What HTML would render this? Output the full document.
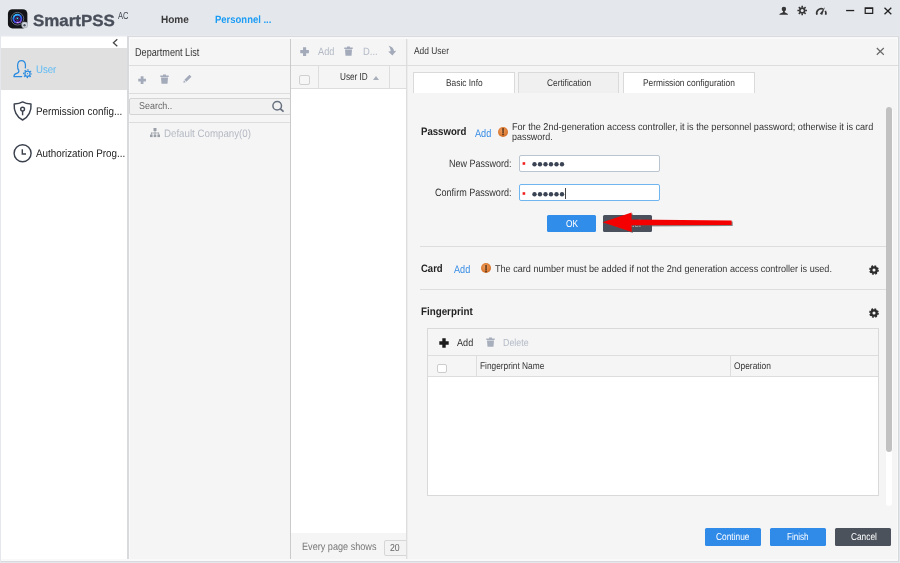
<!DOCTYPE html>
<html><head><meta charset="utf-8">
<style>
*{box-sizing:border-box;margin:0;padding:0}
html,body{width:900px;height:563px;overflow:hidden}
body{background:#e4e7ec;font-family:"Liberation Sans",sans-serif;position:relative;text-rendering:geometricPrecision}
.a{position:absolute}
.t{position:absolute;white-space:nowrap;line-height:1;transform-origin:0 0;filter:blur(0.3px)}
</style></head><body>
<svg class="a" style="left:7px;top:8px" width="23" height="23" viewBox="0 0 23 23"><defs><linearGradient id="lg" x1="0.2" y1="0" x2="0.7" y2="1"><stop offset="0" stop-color="#3ad2ff"/><stop offset="0.45" stop-color="#2a6cf0"/><stop offset="0.8" stop-color="#5a40d8"/><stop offset="1" stop-color="#b070f0"/></linearGradient></defs><rect x="0.4" y="0.7" width="20.5" height="20.2" rx="5" fill="#f1f3f6"/><rect x="0.9" y="1.2" width="19.5" height="19.2" rx="4.5" fill="#121418"/><circle cx="10.4" cy="10.7" r="6.3" fill="#0a0c10" stroke="#8a91a4" stroke-width="0.7"/><circle cx="10.4" cy="10.7" r="4.9" fill="url(#lg)"/><circle cx="10.4" cy="10.7" r="3" fill="#0a0a16"/><circle cx="10.4" cy="10.7" r="1.9" fill="none" stroke="#a030b8" stroke-width="0.6"/><circle cx="10.4" cy="10.4" r="0.9" fill="#38dcf0"/><ellipse cx="10.6" cy="14.4" rx="1.1" ry="0.6" fill="#f0b0ff" opacity="0.85"/><circle cx="17.7" cy="17" r="3.3" fill="#b4bac4"/><circle cx="17.7" cy="17" r="2.2" fill="#d9dde3"/><circle cx="17.5" cy="17.2" r="1.2" fill="#4a505c"/></svg>
<div class="t" style="left:32.8px;top:13px;font-size:16.1px;color:#494f5a;font-weight:bold;transform:scaleX(1.0521);-webkit-text-stroke:0.3px #494f5a;">SmartPSS</div>
<div class="t" style="left:117.5px;top:12px;font-size:10.2px;color:#494f5a;transform:scaleX(0.7406);">AC</div>
<div class="t" style="left:161.3px;top:15px;font-size:10.6px;color:#3a3a3a;font-weight:bold;transform:scaleX(0.9468);">Home</div>
<div class="t" style="left:215.3px;top:15px;font-size:10.6px;color:#1a9cf5;font-weight:bold;transform:scaleX(0.895);">Personnel ...</div>
<svg class="a" style="left:775px;top:3px" width="120" height="16" viewBox="0 0 120 16">
 <g fill="#363636"><circle cx="8.9" cy="5.9" r="2.25"/><rect x="8" y="7.6" width="1.8" height="2.4"/><path d="M4.2 11.8Q4.3 10.3 6.4 9.9L8 9.3H9.8L11.2 9.9Q13 10.3 13.1 11.8Z"/></g>
 <g fill="none" stroke="#363636"><circle cx="27.2" cy="7.5" r="2.35" stroke-width="1.6"/><path stroke-width="1.6" d="M27.2 2.7v1.9M27.2 10.4v1.9M22.4 7.5h1.9M30.1 7.5h1.9M23.81 4.11l1.34 1.34M29.25 9.55l1.34 1.34M30.59 4.11l-1.34 1.34M25.15 9.55l-1.34 1.34"/></g>
 <g fill="none" stroke="#363636" stroke-width="1.7"><path d="M41.98 11.77A4.6 4.6 0 0 1 48.24 6.03"/><path d="M50.28 7.9A4.6 4.6 0 0 1 50.62 11.77"/></g>
 <path d="M44.8 10.7L50 4L47.2 12Z" fill="#363636"/>
 <rect x="71.1" y="6.9" width="8.1" height="1.3" fill="#222"/>
 <path d="M89.6 4.2h8.7v6.8h-8.7zM90.8 6.1v3.7h6.3v-3.7z" fill="#222" fill-rule="evenodd"/>
 <path d="M109.5 4.7l6.8 6.5M116.3 4.7l-6.8 6.5" stroke="#222" stroke-width="1.3" fill="none"/>
</svg>
<div class="a" style="left:0px;top:35px;width:900px;height:1px;background:#e7e9ee;"></div>
<div class="a" style="left:1px;top:36px;width:126px;height:525px;background:#fff;"></div>
<div class="a" style="left:1px;top:36px;width:126px;height:1px;background:#f2f3f5;"></div>
<div class="a" style="left:1px;top:48px;width:126px;height:41.5px;background:#e0e0e0;"></div>
<svg class="a" style="left:110px;top:37px" width="12" height="12" viewBox="0 0 12 12"><path d="M7.3 2.3L3.4 5.8l3.9 3.5" fill="none" stroke="#444" stroke-width="1.25"/></svg>
<svg class="a" style="left:12px;top:58px" width="22" height="22" viewBox="0 0 22 22"><g fill="none" stroke="#2b8be0" stroke-width="1.25" stroke-linecap="round" stroke-linejoin="round"><path d="M9.7 18.6H2C1.8 16.6 3 15.9 4.7 15.4C6.4 14.9 7 13.9 6.9 12.6C5.9 11.4 5.4 9.6 5.6 7.2C5.8 4.3 7.3 2.5 9.5 2.5C11.8 2.5 13.2 4.1 13.4 6.6C13.5 7.6 13.5 8.8 13.3 9.8"/></g><g fill="none" stroke="#2b8be0"><circle cx="15.5" cy="15.7" r="2.6" stroke-width="1.2"/><circle cx="15.5" cy="15.7" r="3.9" stroke-width="1.1" stroke-dasharray="1.5 1.563" stroke-dashoffset="0.75"/></g><circle cx="15.5" cy="15.7" r="0.65" fill="#2b8be0"/></svg>
<div class="t" style="left:36.4px;top:65px;font-size:10.8px;color:#5bbaf6;transform:scaleX(0.8908);">User</div>
<svg class="a" style="left:12px;top:100px" width="22" height="22" viewBox="0 0 22 22"><g fill="none" stroke="#3b424e" stroke-width="1.45" stroke-linejoin="round"><path d="M10.7 1.7c-2.4 1.5-5 2.1-8.4 2.2c-.3 3.5.4 6.8 1.7 9.5c1.4 2.8 3.6 5.2 6.7 6.8c3.1-1.6 5.3-4 6.7-6.8c1.3-2.7 2-6 1.7-9.5c-3.4-.1-6-.7-8.4-2.2z" transform="translate(-0.1,0.2) scale(1,0.98)"/><circle cx="10.6" cy="9.1" r="1.9"/><path d="M10.6 11v4.3"/></g></svg>
<div class="t" style="left:36px;top:107px;font-size:11.1px;color:#222;transform:scaleX(0.8901);">Permission config...</div>
<svg class="a" style="left:12px;top:142px" width="22" height="22" viewBox="0 0 22 22"><g fill="none" stroke="#3b424e" stroke-width="1.45"><circle cx="10.6" cy="11.3" r="8.5"/><path d="M10.3 7.2v4.8h3.7" stroke-width="1.4"/></g></svg>
<div class="t" style="left:36px;top:149px;font-size:11px;color:#222;transform:scaleX(0.895);">Authorization Prog...</div>
<div class="a" style="left:127px;top:36px;width:2px;height:525px;background:#d8dadd;"></div>
<div class="a" style="left:129px;top:36px;width:161px;height:525px;background:#f5f5f5;"></div>
<div class="a" style="left:129px;top:36px;width:1px;height:525px;background:#f9f9f9;"></div>
<div class="t" style="left:135px;top:48px;font-size:11.4px;color:#333;transform:scaleX(0.7989);">Department List</div>
<div class="a" style="left:129px;top:65px;width:161px;height:1px;background:#dddddd;"></div>
<div class="a" style="left:129px;top:93px;width:161px;height:1px;background:#dddddd;"></div>
<svg class="a" style="left:138px;top:75.5px" width="8.2" height="8.2" viewBox="0 0 10 10"><path fill="#a3aaba" d="M3.3 0.3h3.4v3h3v3.4h-3v3h-3.4v-3h-3v-3.4h3z"/></svg>
<svg class="a" style="left:160.2px;top:74.2px" width="9" height="10" viewBox="0 0 9 10"><path fill="#a3aaba" d="M0.3 1.6h2.7v-1.1h3v1.1h2.7v1.3h-8.4zM1 3.6h7l-.5 6.2h-6z"/></svg>
<svg class="a" style="left:183px;top:74.3px" width="9.5" height="9.5" viewBox="0 0 10 10"><path fill="#a3aaba" d="M6.8 0.7l2.1 2.1-5.3 5.3-2.1-2.1zM1 6.7l1.9 1.9-2.6.7z"/></svg>
<div class="a" style="left:129px;top:98px;width:162px;height:16.5px;background:#f1f1f1;border:1px solid #d4d4d4;border-radius:2px"></div>
<div class="t" style="left:139.3px;top:102px;font-size:9.9px;color:#666;transform:scaleX(0.9057);">Search..</div>
<svg class="a" style="left:271px;top:99px" width="14" height="14" viewBox="0 0 14 14"><circle cx="6.2" cy="6.7" r="4.3" fill="none" stroke="#68717f" stroke-width="1.5"/><path d="M9.4 9.9l2.6 2.3" stroke="#68717f" stroke-width="1.8" stroke-linecap="round"/></svg>
<div class="a" style="left:129px;top:122px;width:161px;height:1px;background:#dddddd;"></div>
<svg class="a" style="left:149px;top:127px" width="12" height="12" viewBox="0 0 12 12"><g fill="#9a9fa8"><rect x="4.5" y="1" width="3" height="3"/><rect x="1" y="7.5" width="2.6" height="2.6"/><rect x="4.7" y="7.5" width="2.6" height="2.6"/><rect x="8.4" y="7.5" width="2.6" height="2.6"/><rect x="5.6" y="4" width=".8" height="3.5"/><rect x="2" y="5.6" width="8" height=".8"/><rect x="2" y="5.6" width=".8" height="2"/><rect x="9.3" y="5.6" width=".8" height="2"/></g></svg>
<div class="t" style="left:164px;top:129px;font-size:10.8px;color:#b4b9c2;transform:scaleX(0.9001);">Default Company(0)</div>
<div class="a" style="left:290px;top:36px;width:1px;height:525px;background:#cacaca;"></div>
<div class="a" style="left:291px;top:36px;width:115px;height:525px;background:#f5f5f5;"></div>
<svg class="a" style="left:300px;top:46.5px" width="9.2" height="9.2" viewBox="0 0 10 10"><path fill="#a3aaba" d="M3.3 0.3h3.4v3h3v3.4h-3v3h-3.4v-3h-3v-3.4h3z"/></svg>
<div class="t" style="left:318.3px;top:47px;font-size:10.6px;color:#b3bac6;transform:scaleX(0.8692);">Add</div>
<svg class="a" style="left:343.8px;top:45.8px" width="9" height="10" viewBox="0 0 9 10"><path fill="#a3aaba" d="M0.3 1.6h2.7v-1.1h3v1.1h2.7v1.3h-8.4zM1 3.6h7l-.5 6.2h-6z"/></svg>
<div class="t" style="left:362.8px;top:47px;font-size:10.6px;color:#b3bac6;transform:scaleX(0.8918);">D...</div>
<svg class="a" style="left:386px;top:44px" width="12" height="13" viewBox="386 44 12 13"><path fill="#a3aaba" d="M388.6 45.7C391.6 46.3 393.7 48.3 394 50.9L396.3 50.7L392.4 55.4L388.2 51.5L390.7 51.3C390.6 49.3 389.9 47.4 388.6 45.7Z"/></svg>
<div class="a" style="left:291px;top:65px;width:115px;height:1px;background:#dddddd;"></div>
<div class="a" style="left:291px;top:88px;width:115px;height:1px;background:#dddddd;"></div>
<div class="a" style="left:291px;top:89px;width:115px;height:444px;background:#fff;"></div>
<div class="a" style="left:299px;top:75px;width:10.5px;height:10px;background:#f6f6f6;border:1px solid #d0d0d0;border-radius:2px"></div>
<div class="a" style="left:318px;top:66px;width:1px;height:22px;background:#dddddd;"></div>
<div class="a" style="left:389px;top:66px;width:1px;height:22px;background:#dddddd;"></div>
<div class="t" style="left:340px;top:73px;font-size:10.2px;color:#333;transform:scaleX(0.804);">User ID</div>
<svg class="a" style="left:372.5px;top:75.8px" width="6" height="4" viewBox="0 0 6 4"><path d="M0 4L3 0L6 4z" fill="#a9afba"/></svg>
<div class="t" style="left:301.7px;top:542px;font-size:10.6px;color:#777;transform:scaleX(0.8603);">Every page shows</div>
<div class="a" style="left:384px;top:540px;width:24px;height:15.5px;background:#f3f3f3;border:1px solid #d6d6d6;border-radius:2px"></div>
<div class="t" style="left:390.3px;top:544px;font-size:10.2px;color:#666;transform:scaleX(0.8567);">20</div>
<div class="a" style="left:406px;top:36px;width:492px;height:525px;background:#f5f5f5;"></div>
<div class="a" style="left:406px;top:36px;width:1px;height:525px;background:#dddddd;"></div>
<div class="a" style="left:407px;top:36px;width:1px;height:525px;background:#ececec;"></div>
<div class="a" style="left:897px;top:36px;width:1px;height:525px;background:#fafafa;"></div>
<div class="a" style="left:898px;top:36px;width:1px;height:525px;background:#d6d8db;"></div>
<div class="a" style="left:129px;top:36px;width:770px;height:1px;background:#d9dbde;"></div>
<div class="a" style="left:129px;top:37px;width:769px;height:1px;background:#f8f8f8;"></div>
<div class="a" style="left:129px;top:38px;width:769px;height:1px;background:#fafafa;"></div>
<div class="a" style="left:1px;top:559px;width:897px;height:2px;background:#f9f9f9;"></div>
<div class="a" style="left:1px;top:561px;width:898px;height:1px;background:#d8dadd;"></div>
<div class="t" style="left:414.2px;top:47px;font-size:9.8px;color:#333;transform:scaleX(0.8565);">Add User</div>
<svg class="a" style="left:876px;top:47px" width="9" height="9" viewBox="0 0 9 9"><path d="M0.8 1l7 6.8M7.8 1l-7 6.8" stroke="#6a6a6a" stroke-width="1.2" fill="none"/></svg>
<div class="a" style="left:407px;top:65px;width:491px;height:1px;background:#dddddd;"></div>
<div class="a" style="left:413.3px;top:72px;width:101.7px;height:20.5px;background:#fff;border:1px solid #dadada;border-bottom:none"></div>
<div class="t" style="left:445.8px;top:79px;font-size:9.7px;color:#333;transform:scaleX(0.8618);">Basic Info</div>
<div class="a" style="left:518.3px;top:72px;width:101px;height:20.5px;background:#f0f0f0;border:1px solid #dadada;border-bottom:none"></div>
<div class="t" style="left:547px;top:79px;font-size:9.7px;color:#333;transform:scaleX(0.8611);">Certification</div>
<div class="a" style="left:623px;top:72px;width:132px;height:20.5px;background:#fff;border:1px solid #dadada;border-bottom:none"></div>
<div class="t" style="left:642.6px;top:79px;font-size:9.7px;color:#333;transform:scaleX(0.8662);">Permission configuration</div>
<div class="a" style="left:886px;top:106.5px;width:5.5px;height:399px;background:#fff;border-radius:3px"></div>
<div class="a" style="left:892px;top:110px;width:1px;height:340px;background:#fbfbfb;"></div>
<div class="a" style="left:886px;top:106.5px;width:5.5px;height:345px;background:#c1c1c1;border-radius:3px"></div>
<div class="t" style="left:420.8px;top:127px;font-size:10.9px;color:#222;font-weight:bold;transform:scaleX(0.8835);">Password</div>
<div class="t" style="left:475px;top:129px;font-size:11px;color:#3a8ee6;transform:scaleX(0.8325);">Add</div>
<div class="a" style="left:498.3px;top:126.69999999999999px;width:10px;height:10px;border-radius:50%;background:radial-gradient(circle at 45% 40%,#f0a060,#dc7a32 55%,#b8622a);"></div>
<div class="t" style="left:502.3px;top:128px;font-size:9.8px;color:#140a05;font-weight:bold;transform:scaleX(0.6397);-webkit-text-stroke:0.25px #140a05;filter:none;">!</div>
<div class="t" style="left:512.2px;top:123px;font-size:9.9px;color:#333;transform:scaleX(0.9217);">For the 2nd-generation access controller, it is the personnel password; otherwise it is card</div>
<div class="t" style="left:512.2px;top:133px;font-size:9.9px;color:#333;transform:scaleX(0.9038);">password.</div>
<div class="t" style="left:448.7px;top:159px;font-size:10.6px;color:#333;transform:scaleX(0.849);">New Password:</div>
<div class="a" style="left:519px;top:154.8px;width:140.8px;height:16.9px;background:#fff;border:1px solid #bac5d0;border-radius:2px"></div>
<div class="t" style="left:435px;top:188px;font-size:10.6px;color:#333;transform:scaleX(0.8546);">Confirm Password:</div>
<div class="a" style="left:519px;top:184.2px;width:140.8px;height:17.1px;background:#fff;border:1px solid #6fb6f1;border-radius:2px"></div>
<svg class="a" style="left:520px;top:159.1px" width="50" height="10" viewBox="0 0 50 10"><rect x="2.6" y="3.2" width="2.6" height="2.6" fill="#f02020"/><circle cx="14.5" cy="5.2" r="2.2" fill="#3a4454"/><circle cx="20" cy="5.2" r="2.2" fill="#3a4454"/><circle cx="25.5" cy="5.2" r="2.2" fill="#3a4454"/><circle cx="31" cy="5.2" r="2.2" fill="#3a4454"/><circle cx="36.5" cy="5.2" r="2.2" fill="#3a4454"/><circle cx="42" cy="5.2" r="2.2" fill="#3a4454"/></svg>
<svg class="a" style="left:520px;top:188.7px" width="50" height="10" viewBox="0 0 50 10"><rect x="2.6" y="3.2" width="2.6" height="2.6" fill="#f02020"/><circle cx="14.5" cy="5.2" r="2.2" fill="#3a4454"/><circle cx="20" cy="5.2" r="2.2" fill="#3a4454"/><circle cx="25.5" cy="5.2" r="2.2" fill="#3a4454"/><circle cx="31" cy="5.2" r="2.2" fill="#3a4454"/><circle cx="36.5" cy="5.2" r="2.2" fill="#3a4454"/><circle cx="42" cy="5.2" r="2.2" fill="#3a4454"/></svg>
<div class="a" style="left:564.8px;top:188px;width:1px;height:10.5px;background:#444;"></div>
<div class="a" style="left:547px;top:215px;width:49px;height:17px;background:#318dea;border-radius:1.5px"></div>
<div class="t" style="left:566px;top:220px;font-size:10.1px;color:#fff;transform:scaleX(0.8222);">OK</div>
<div class="a" style="left:603px;top:215px;width:49px;height:17px;background:#4a515c;border-radius:1.5px"></div>
<div class="t" style="left:615px;top:220px;font-size:10.1px;color:#fff;transform:scaleX(0.8264);">Cancel</div>
<svg class="a" style="left:598px;top:205px;overflow:visible" width="145" height="36" viewBox="0 0 145 36"><path d="M4.5 17.2L33.6 7.5L33.5 14.5L133.6 15.5L133.6 19.9L33.6 20.3L33.8 26.9z" fill="#555" opacity=".7" transform="translate(1.1,1.1)"/><path d="M4.5 17.2L33.6 7.5L33.5 14.5L133.6 15.5L133.6 19.9L33.6 20.3L33.8 26.9z" fill="#f50000"/></svg>
<div class="a" style="left:420px;top:246px;width:466px;height:1px;background:#dddddd;"></div>
<div class="t" style="left:420.8px;top:264px;font-size:10.9px;color:#222;font-weight:bold;transform:scaleX(0.8732);">Card</div>
<div class="t" style="left:453.8px;top:265px;font-size:11px;color:#3a8ee6;transform:scaleX(0.8274);">Add</div>
<div class="a" style="left:480.8px;top:263.2px;width:10px;height:10px;border-radius:50%;background:radial-gradient(circle at 45% 40%,#f0a060,#dc7a32 55%,#b8622a);"></div>
<div class="t" style="left:484.8px;top:265px;font-size:9.8px;color:#140a05;font-weight:bold;transform:scaleX(0.6397);-webkit-text-stroke:0.25px #140a05;filter:none;">!</div>
<div class="t" style="left:495px;top:265px;font-size:9.9px;color:#333;transform:scaleX(0.9202);">The card number must be added if not the 2nd generation access controller is used.</div>
<div class="a" style="left:420px;top:289px;width:466px;height:1px;background:#dddddd;"></div>
<div class="t" style="left:420.8px;top:307px;font-size:10.9px;color:#222;font-weight:bold;transform:scaleX(0.8992);">Fingerprint</div>
<svg class="a" style="left:867.7px;top:264.2px" width="12" height="12" viewBox="-6 -6 12 12"><g fill="none" stroke="#2c2c2c"><circle r="2.7" stroke-width="2.3"/><circle r="4.1" stroke-width="1.5" stroke-dasharray="1.8 1.42"/></g></svg>
<svg class="a" style="left:867.7px;top:307.2px" width="12" height="12" viewBox="-6 -6 12 12"><g fill="none" stroke="#2c2c2c"><circle r="2.7" stroke-width="2.3"/><circle r="4.1" stroke-width="1.5" stroke-dasharray="1.8 1.42"/></g></svg>
<div class="a" style="left:427px;top:328px;width:452px;height:168px;background:#fff;border:1px solid #d9d9d9"></div>
<div class="a" style="left:428px;top:329px;width:450px;height:47px;background:#f5f5f5;"></div>
<div class="a" style="left:428px;top:354.5px;width:450px;height:1px;background:#dddddd;"></div>
<div class="a" style="left:428px;top:376px;width:450px;height:1px;background:#dddddd;"></div>
<svg class="a" style="left:438.8px;top:337.6px" width="10" height="10" viewBox="0 0 10 10"><path fill="#1c1c1c" d="M3.3 0.3h3.4v3h3v3.4h-3v3h-3.4v-3h-3v-3.4h3z"/></svg>
<div class="t" style="left:456.7px;top:339px;font-size:10.3px;color:#333;transform:scaleX(0.8836);">Add</div>
<svg class="a" style="left:486px;top:337px" width="9" height="10" viewBox="0 0 9 10"><path fill="#a8afbc" d="M0.3 1.6h2.7v-1.1h3v1.1h2.7v1.3h-8.4zM1 3.6h7l-.5 6.2h-6z"/></svg>
<div class="t" style="left:503.3px;top:339px;font-size:10.3px;color:#b3bac6;transform:scaleX(0.86);">Delete</div>
<div class="a" style="left:436.7px;top:363.8px;width:10px;height:9.5px;background:#fff;border:1px solid #ccc;border-radius:2px"></div>
<div class="a" style="left:476px;top:355.5px;width:1px;height:20.5px;background:#dddddd;"></div>
<div class="a" style="left:730px;top:355.5px;width:1px;height:20.5px;background:#dddddd;"></div>
<div class="t" style="left:480px;top:362px;font-size:9.7px;color:#333;transform:scaleX(0.8594);">Fingerprint Name</div>
<div class="t" style="left:734px;top:362px;font-size:9.7px;color:#333;transform:scaleX(0.866);">Operation</div>
<div class="a" style="left:704.5px;top:528px;width:56.5px;height:18px;background:#2f8ae8;border-radius:1.5px"></div>
<div class="t" style="left:716.2px;top:533px;font-size:10.1px;color:#fff;transform:scaleX(0.8282);">Continue</div>
<div class="a" style="left:770px;top:528px;width:56px;height:18px;background:#2f8ae8;border-radius:1.5px"></div>
<div class="t" style="left:787.3px;top:533px;font-size:10.1px;color:#fff;transform:scaleX(0.801);">Finish</div>
<div class="a" style="left:835.2px;top:528px;width:56.2px;height:17.8px;background:#4b525c;border-radius:1.5px"></div>
<div class="t" style="left:850.6px;top:533px;font-size:10.1px;color:#fff;transform:scaleX(0.8232);">Cancel</div>
</body></html>
